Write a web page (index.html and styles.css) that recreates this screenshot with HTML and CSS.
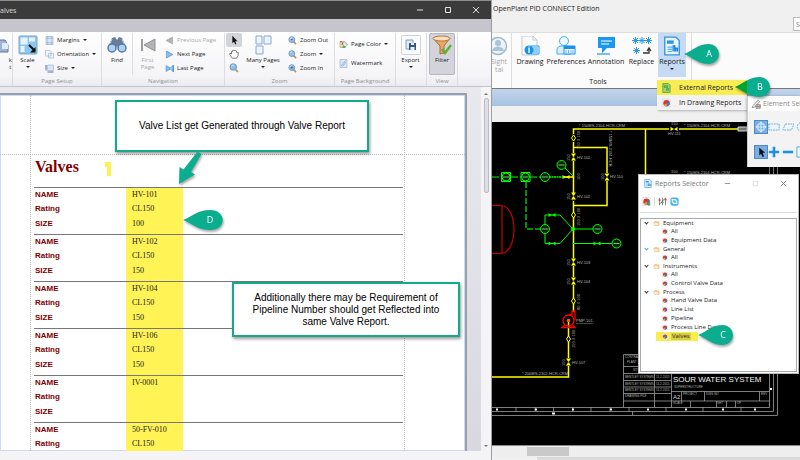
FILE: index.html
```html
<!DOCTYPE html>
<html lang="en">
<head>
<meta charset="utf-8">
<title>Valves</title>
<link rel="stylesheet" href="styles.css">
</head>
<body>
<svg class="sprite" aria-hidden="true">
  <symbol id="pie" viewBox="0 0 12 12"><path d="M1 .5h8l2 2v9H1z" fill="#eef1f5" stroke="#c3c9d2" stroke-width=".6"/><circle cx="6" cy="6.2" r="4.2" fill="#e2331c"/><path d="M6 6.2 9.6 4A4.2 4.2 0 0 1 6.500 10.400z" fill="#2b7de0"/><path d="M6 6.200 6.500 10.400A4.200 4.200 0 0 1 2.500 8.600z" fill="#f4a62a"/></symbol>
  <symbol id="folder" viewBox="0 0 14 12"><path d="M3 2h4l1 1h5v8H3z" fill="#efc98b"/><path d="M1 5h9l2 6H3z" fill="#fbeccd" stroke="#d9ab66" stroke-width=".7"/></symbol>
  <symbol id="lens" viewBox="0 0 20 20"><path d="m12 12 6 6" stroke="#c98a55" stroke-width="3.500"/><circle cx="8.500" cy="8" r="6.500" fill="#8ec2ee" stroke="#7792b5" stroke-width="2"/><path d="M4.500 7a4.500 4.500 0 0 1 5-3" stroke="#e8f5ff" stroke-width="1.500" fill="none"/></symbol>
  <symbol id="report" viewBox="0 0 16 18"><path d="M1.500 1h10l3 3v13h-13z" fill="#e8f4ff" stroke="#2f94e0" stroke-width="1.200"/><path d="M3.500 4h6v3h-6z" fill="#2f94e0"/><path d="M4 10h4M4 12h4M4 14h4" stroke="#5aaeea"/><path d="M9 14V9h1.500v5M11.500 14v-3H13v3" fill="none" stroke="#1c83d8" stroke-width="1.200"/></symbol>
</svg>

<main class="desktop">
  <section class="preview">
    <header class="preview-title">
      <span>alves</span>
      <div class="window-buttons">
        <button aria-label="Minimize"><svg viewBox="0 0 8 8"><path d="M1 4h6"/></svg></button>
        <button aria-label="Maximize"><svg viewBox="0 0 8 8"><path d="M1.500 1.500h5v5h-5z"/></svg></button>
        <button aria-label="Close"><svg viewBox="0 0 8 8"><path d="m1 1 6 6M7 1 1 7"/></svg></button>
      </div>
    </header>
    <div class="tab-strip"></div>
    <div class="ribbon">
      <div class="group g-print">
        <div class="group-body"><button class="big"><svg viewBox="0 0 20 20"><path d="M5 5h8l3 5v7H4z" fill="#9fb4d4" stroke="#60779e"/><path d="M10 8h6v6h-6z" fill="#dcebfa"/></svg><span>k<br>t</span></button></div>
        <div class="group-name"></div>
      </div>
      <div class="group g-setup">
        <div class="group-body">
          <button class="big"><svg viewBox="0 0 20 20"><rect x="1" y="1" width="18" height="18" rx="1" fill="#8ec5ef" stroke="#79a6ce"/><path d="M2.500 2.500h7v7h-7zM11 2.500h6v4h-6zM2.500 11h4v6h-4z" fill="#e5f4ff"/><path d="m11 10 6 6" stroke="#111" stroke-width="2"/><path d="m17.500 12v5.500H12z" fill="#111"/></svg><span>Scale</span><i class="caret"></i></button>
          <div class="rows">
            <button class="row"><svg viewBox="0 0 18 18"><path d="M2 1h14v16H2z" fill="#e3ecf9" stroke="#7d97c0"/><path d="M5.500 1v16M12.500 1v16M2 4.500h14M2 13.500h14" stroke="#7d97c0"/></svg>Margins<i class="caret"></i></button>
            <button class="row"><svg viewBox="0 0 18 18"><path d="M1 1h9l2 2v9H1zM7 7h10v9H7z" fill="#eef4fb" stroke="#86a0c6"/></svg>Orientation<i class="caret"></i></button>
            <button class="row"><svg viewBox="0 0 18 18"><path d="M5 2h12v11H5z" fill="#dce7f6" stroke="#86a0c6"/><path d="M2 2v11M5 16h12" stroke="#536f9d" stroke-width="2"/></svg>Size<i class="caret"></i></button>
          </div>
        </div>
        <div class="group-name">Page Setup</div>
      </div>
      <div class="group g-nav">
        <div class="group-body">
          <button class="big"><svg viewBox="0 0 20 20"><path d="m5 3 3-1 2 3 2-3 3 1 4 9-5 5-4-6-4 6-5-5z" fill="#697c9b"/><path d="M5 4 2.500 10M15 4l2.500 6" stroke="#c5d2e6"/><circle cx="5" cy="13" r="4" fill="#a9d3f7" stroke="#5f779c" stroke-width="1.500"/><circle cx="15" cy="13" r="4" fill="#a9d3f7" stroke="#5f779c" stroke-width="1.500"/></svg><span>Find</span></button>
          <button class="big off ruled" disabled><svg viewBox="0 0 20 20"><path d="M4 4v12" stroke="#9a9a9e" stroke-width="2"/><path d="M17 4v12L6 10z" fill="#b3b3b6" stroke="#929296"/></svg><span>First<br>Page</span></button>
          <div class="rows">
            <button class="row off" disabled><svg viewBox="0 0 18 18"><path d="M15 2v14L2 9z" fill="#b3b3b6" stroke="#929296"/></svg>Previous Page</button>
            <button class="row"><svg viewBox="0 0 18 18"><path d="M3 2v14l13-7z" fill="#83c0f2" stroke="#3d7fc0"/></svg>Next Page</button>
            <button class="row"><svg viewBox="0 0 18 18"><path d="M2 3v12l11-6z" fill="#83c0f2" stroke="#3d7fc0"/><path d="M16 3v12l-6-6z" fill="#a8d4f7" stroke="#3d7fc0"/><path d="M16.500 2v14" stroke="#3d7fc0" stroke-width="2"/></svg>Last Page</button>
          </div>
        </div>
        <div class="group-name">Navigation</div>
      </div>
      <div class="group g-zoom">
        <div class="group-body">
          <div class="tools">
            <button class="tool on" aria-label="Pointer"><svg viewBox="0 0 12 12"><path d="M4 1v9l2-2 1.500 3.500 1.300-.7L7.500 7.500h2.700z" fill="#111"/></svg></button>
            <button class="tool" aria-label="Hand"><svg viewBox="0 0 12 12"><path d="M4 11 1 7V5l2 1V3h1.500V1.500H6L7.500 2l1.500.500V4l2 0v3.500L9 11z" fill="#fff" stroke="#555" stroke-width=".9"/></svg></button>
            <button class="tool" aria-label="Magnifier"><svg viewBox="0 0 20 20"><use href="#lens"/></svg></button>
          </div>
          <button class="big"><svg viewBox="0 0 20 20"><path d="M3 1h6v8H3zM11 1h7v8h-7zM3 11h7v8H3z" fill="#edf4fd" stroke="#8ba6ce"/></svg><span>Many Pages</span><i class="caret"></i></button>
          <div class="rows">
            <button class="row"><svg viewBox="0 0 20 20"><use href="#lens"/><path d="M6 8h5" stroke="#274b7d" stroke-width="1.500"/></svg>Zoom Out</button>
            <button class="row"><svg viewBox="0 0 20 20"><use href="#lens"/></svg>Zoom<i class="caret"></i></button>
            <button class="row"><svg viewBox="0 0 20 20"><use href="#lens"/><path d="M5.500 8h6M8.500 5v6" stroke="#274b7d" stroke-width="1.500"/></svg>Zoom In</button>
          </div>
        </div>
        <div class="group-name">Zoom</div>
      </div>
      <div class="group g-back">
        <div class="group-body">
          <div class="rows roomy">
            <button class="row"><svg viewBox="0 0 18 18"><path d="M2 3h8v12H2z" fill="#f0dfb7" stroke="#a58849"/><path d="m7 7 5-4 5 7-6 5z" fill="#dceaf8" stroke="#5f7896"/><path d="M2 4c4-3 6 2 4 6" fill="none" stroke="#d94c2d" stroke-width="2"/><path d="M7 12h6v4H7z" fill="#5eae4b"/></svg>Page Color<i class="caret"></i></button>
            <button class="row"><svg viewBox="0 0 18 18"><path d="M2 1h14v16H2z" fill="#dce8f8" stroke="#7f9cc5"/><path d="m4 14 9-11M7 15l7-9" stroke="#7f9cc5" stroke-width="1.500"/></svg>Watermark</button>
          </div>
        </div>
        <div class="group-name">Page Background</div>
      </div>
      <div class="group g-export">
        <div class="group-body"><button class="big"><svg viewBox="0 0 20 20"><rect x=".5" y=".5" width="19" height="19" rx="1" fill="#fafbfd" stroke="#cfd1d8"/><path d="M5 5h7v9H5z" fill="#dfeafa" stroke="#7f9cc5"/><path d="M8 8h7v7H8z" fill="#39557f"/><path d="M10 8h3v2h-3zM9.500 12h4v3h-4z" fill="#e8f1fb"/></svg><span>Export</span><i class="caret"></i></button></div>
        <div class="group-name"></div>
      </div>
      <div class="group g-view">
        <div class="group-body"><button class="big on"><svg viewBox="0 0 20 20"><path d="M1 3h17l-6 8v7l-4 1v-8z" fill="#e8a764" stroke="#af6b31"/><ellipse cx="9.500" cy="3.500" rx="8.500" ry="2.500" fill="#f9dfbd" stroke="#b6763e"/><path d="m10 14 3 4 6-8" fill="none" stroke="#65ae3c" stroke-width="2.500"/></svg><span>Filter</span></button></div>
        <div class="group-name">View</div>
      </div>
    </div>
    <div class="viewer">
      <div class="paper-area">
        <article class="paper">
          <h1>Valves <svg class="mark" viewBox="0 0 6 14"><path d="M0 0h6v14H2V5H0z" fill="#fff151"/></svg></h1>
          <table class="records">
            <tbody><tr><th scope="row">NAME</th><td>HV-101</td><td></td></tr><tr><th scope="row">Rating</th><td>CL150</td><td></td></tr><tr><th scope="row">SIZE</th><td>100</td><td></td></tr></tbody>
            <tbody><tr><th scope="row">NAME</th><td>HV-102</td><td></td></tr><tr><th scope="row">Rating</th><td>CL150</td><td></td></tr><tr><th scope="row">SIZE</th><td>150</td><td></td></tr></tbody>
            <tbody><tr><th scope="row">NAME</th><td>HV-104</td><td></td></tr><tr><th scope="row">Rating</th><td>CL150</td><td></td></tr><tr><th scope="row">SIZE</th><td>150</td><td></td></tr></tbody>
            <tbody><tr><th scope="row">NAME</th><td>HV-106</td><td></td></tr><tr><th scope="row">Rating</th><td>CL150</td><td></td></tr><tr><th scope="row">SIZE</th><td>150</td><td></td></tr></tbody>
            <tbody><tr><th scope="row">NAME</th><td>IV-0001</td><td></td></tr><tr><th scope="row">Rating</th><td></td><td></td></tr><tr><th scope="row">SIZE</th><td></td><td></td></tr></tbody>
            <tbody><tr><th scope="row">NAME</th><td>50-FV-010</td><td></td></tr><tr><th scope="row">Rating</th><td>CL150</td><td></td></tr></tbody>
          </table>
        </article>
      </div>
      <div class="vscroll"><i class="up"></i><div class="thumb"></div><i class="down"></i></div>
    </div>
    <div class="hscroll"></div>
  </section>

  <section class="cad">
    <header class="cad-title">OpenPlant PID CONNECT Edition</header>
    <div class="search-row"><input aria-label="Search" value="Search"></div>
    <div class="cad-ribbon">
      <div class="cad-group cut">
        <button class="app off"><svg viewBox="0 0 20 20"><circle cx="9" cy="10" r="8.500" fill="#edf3f8" stroke="#9db7cc" stroke-width="1.500"/><circle cx="9" cy="7" r="3" fill="#a9c3d7"/><path d="M3 15c1-6 11-6 12 0z" fill="#a9c3d7"/></svg><span>Sight<br>tal</span></button>
      </div>
      <div class="cad-group wide">
        <div class="apps">
          <button class="app"><svg viewBox="0 0 20 20"><path d="M2 0h11l4 4v15H2z" fill="#fafafa" stroke="#c8c8c8"/><path d="M13 0v4h4" fill="none" stroke="#c8c8c8"/><path d="M11 10h8v8h-8z" fill="#fff" stroke="#239ae8"/><path d="M13 12h5M13 14h5M13 16h5" stroke="#239ae8"/><circle cx="9" cy="14" r="4.500" fill="#1794ea"/><path d="M9 12v5M9 10.500v1" stroke="#fff" stroke-width="1.300"/></svg><span>Drawing</span></button>
          <button class="app"><svg viewBox="0 0 20 20"><circle cx="8" cy="5" r="4.500" fill="#eef8ff" stroke="#42aef2"/><path d="M1 18v-4q0-4 5-4h5q4 0 4 4v4z" fill="#d9effe" stroke="#42aef2"/><path d="M8 10h11v8H8z" fill="#fff" stroke="#1694ea"/><path d="M8 10h11v3H8z" fill="#1694ea"/><path d="M10 14v4M12.500 14v4M15 14v4M17 14v4" stroke="#5db6f2"/></svg><span>Preferences</span></button>
          <button class="app"><svg viewBox="0 0 20 20"><path d="M2 1h17v11h-8l-5 5v-5H2z" fill="#1a98f0"/><path d="M5 5h11M5 8h8" stroke="#fff" stroke-width="1.200"/><path d="M1 18h13" stroke="#47adf0" stroke-width="1.500"/></svg><span>Annotation</span></button>
          <button class="app"><svg viewBox="0 0 20 20"><g stroke="#239ae8"><path id="star" d="M3.500 1v7M0 4.500h7M1 2l5 5M6 2 1 7"/><use href="#star" x="6.500"/><use href="#star" x="13"/><use href="#star" x="1" y="10"/></g><path d="M11 17h6v-4m-2 2 2-3 2 3" fill="none" stroke="#333" stroke-width="1.300"/></svg><span>Replace</span></button>
          <button class="app on"><svg viewBox="0 0 16 18"><use href="#report"/></svg><span>Reports</span><i class="caret"></i></button>
        </div>
        <div class="cad-group-name">Tools</div>
      </div>
    </div>
    <div class="blue-strip"></div>
    <div class="view-bar"></div>
    <div class="canvas">
      <svg viewBox="492 122 308 324" preserveAspectRatio="xMinYMin slice">
        <defs>
          <g id="vv"><path d="M-2.500-3.500h5L-2.500 3.500h5z"/></g>
          <g id="hv"><path d="M-3.500-2v4L3.500-2v4z"/></g>
          <g id="dm"><path d="M0-3 2 0 0 3-2 0z"/></g>
        </defs>
        <g fill="none" stroke="#ffff00" stroke-width="1.500">
          <path d="M738 129H573.500V312M573.500 147.500H607V205.500H573.500M645.500 129V176M568.500 321V377H492M564 177h9"/>
        </g>
        <path d="M669 129h10M573.500 134v8M573.500 153v8M573.500 193v8M607 173v8M573.500 258v8M573.500 277v8M568.500 358v8" stroke="#000" stroke-width="2"/>
        <g fill="#ffff00">
          <use href="#hv" x="674" y="129"/><use href="#hv" x="566" y="177"/>
          <use href="#vv" x="573.500" y="157"/><use href="#vv" x="573.500" y="196"/><use href="#vv" x="607" y="177"/><use href="#vv" x="573.500" y="262"/><use href="#vv" x="573.500" y="281"/><use href="#vv" x="568.500" y="362"/>
        </g>
        <g fill="#000" stroke="#ffff00"><use href="#dm" x="573.500" y="138"/><use href="#dm" x="573.500" y="215"/><use href="#dm" x="573.500" y="301"/><use href="#dm" x="568.500" y="339"/></g>
        <g fill="none" stroke="#00ff00">
          <path d="M492 177h9M511 177h10M530 177h11" stroke-dasharray="7 2"/>
          <path d="M549 177h15" stroke-width="1.500" stroke-dasharray="2 .5"/>
          <path d="M526 182v47h15" stroke="#00c000" stroke-width="1.500" stroke-dasharray="6 2"/>
          <path d="M501.500 172.500h9v9h-9zM521 172.500h9v9h-9z"/>
          <path d="m565 168 8 8M545 225v-10h15l13 14-13 14.500h-15V233M573 229h20M573 243.500h39"/>
          <g fill="#002400"><circle cx="506" cy="177" r="4"/><circle cx="525.500" cy="177" r="4"/><circle cx="545" cy="177" r="4.500"/><circle cx="561.500" cy="165" r="4.500"/><circle cx="545" cy="229" r="4.500"/><circle cx="597.500" cy="229" r="4.500"/><circle cx="616.500" cy="243.500" r="4.500"/></g>
          <path d="M503 177h6M522.500 177h6M542 177h6M558.500 165h6M542 229h6M594.500 229h6M613.500 243.500h6" stroke="#b8d8b8" stroke-width=".8"/>
        </g>
        <g fill="#00ff00"><use href="#hv" x="552" y="215"/><use href="#hv" x="552" y="243.500"/><use href="#hv" x="597" y="243.500"/><circle cx="573" cy="229" r="2"/></g>
        <g fill="none" stroke="#c80000" stroke-width="1.200"><path d="M492 205.500h10v48h-10M502 205.500c16 3 16 45 0 48"/></g>
        <g fill="none" stroke="#ff0000" stroke-width="1.300"><circle cx="568.500" cy="320.500" r="5.500"/><path d="M569 315h3v-4h3v9M565 325l-3 2.500h13l-2.500-2.500"/></g><circle cx="568.500" cy="320.500" r="1.800" fill="#ff5a00"/>
        <g class="tag">
          <text x="577" y="159">HV-102</text><text x="577" y="198">HV-102</text><text x="610" y="178">HV-110</text><text x="577" y="264">HV-103</text><text x="577" y="283">HV-104</text><text x="572" y="364">HV-107</text><text x="576" y="322" text-decoration="underline">PMP-101</text>
          <text x="579" y="127">* 150MS-2104-HCR-CRM</text><text x="684" y="127">* 150MS-2104-HCR-CRM</text><text x="684" y="174">* 150MS-2104-HCR-CRM</text><text x="522" y="375">* 200MS-2102-HCR-CRM</text><text x="671" y="125">150</text><text x="668" y="135">HV-111</text><text x="671" y="173">150</text>
          <text transform="translate(580 149) rotate(-90)">150 X 150</text><text transform="translate(580 226) rotate(-90)">150 X 100</text><text transform="translate(580 310) rotate(-90)">80 X 100</text><text transform="translate(575 348) rotate(-90)">150 X 100</text><text transform="translate(609 131) rotate(90)">* 150MS-2104-HCR</text>
          <text transform="translate(570 161) rotate(-90)">150</text><text transform="translate(570 200) rotate(-90)">150</text><text transform="translate(580 180) rotate(-90)">100</text><text transform="translate(604 180) rotate(-90)">100</text><text transform="translate(570 266) rotate(-90)">150</text><text transform="translate(570 285) rotate(-90)">150</text><text transform="translate(565 366) rotate(-90)">150</text>
        </g>
        <path d="M738 127h9v4h-9z" fill="#777" stroke="#ddd"/>
        <g fill="none" stroke="#9c9c9c" stroke-width=".8">
          <path d="M492 407.500H769.500V122M492 411.500H773.500V122M492 415.500H777.500V122"/>
          <path d="M623.500 407.500v-53h30M623.500 366.500h48M623.500 373.500h146M623.500 380.500h48M623.500 387h48M623.500 393.500h48M623.500 401h146M654.500 354v53.500M671.500 354v53.500M671.500 391.500h98M681.500 391.500v9.500M704.500 391.500v9.500M759.500 391.500v9.500M690.500 401v6.500M716.500 401v6.500M726.500 401v6.500M735.500 401v6.500"/>
          <path d="M516 407v4M535 407v4M553.500 407v4M572.500 407v4M591 407v4M610 407v4M629 407v4M666 407v4M703 407v4M741 407v4M632.500 411v4M769 352h4"/>
        </g>
        <path d="M496 409.500h2M535 409.500h2M572 409.500h2M610 409.500h2M647 409.500h2M685 409.500h2M722 409.500h2M754 409.500h2M552 413.500h3M771 388v2" stroke="#fff" stroke-width="2"/>
        <g class="tag small">
          <text x="625" y="358">CONTRACT</text><text x="627" y="363">PLANT 1</text><text x="633" y="371">SITE 2</text><text x="625" y="378">BENTLEY SYSTEMS</text><text x="625" y="385">BENTLEY SYSTEMS</text><text x="625" y="391">BENTLEY SYSTEMS</text><text x="656" y="378">11-2-2015</text><text x="656" y="385">11-2-2015</text><text x="656" y="391">11-2-2015</text><text x="625" y="397">DRAWING FILE</text><text x="674" y="388">SUPERSTRUCTURE</text><text x="683" y="395">PROJECT</text><text x="706" y="395">DWG NO</text><text x="761" y="395">REV</text><text x="673" y="404">SCALE</text><text x="717" y="404">SHT</text><text x="737" y="404">OF</text>
        </g>
        <text class="drawing-name" x="673" y="382">SOUR WATER SYSTEM</text>
        <text class="drawing-size" x="673" y="399">A2</text>
      </svg>
    </div>
    <div class="cad-scroll"><div class="cad-thumb"></div></div>
    <div class="status"></div>
  </section>

  <div class="menu" role="menu">
    <button class="menu-item marked" role="menuitem"><svg viewBox="0 0 16 18"><path d="M1.500 1h10l3 3v13h-13z" fill="#aad36b" stroke="#4da047" stroke-width="1.500"/><path d="M4 5h6v3H4zM8 14v-4h4v4" fill="#73b948" stroke="#399247"/></svg>External Reports</button>
    <button class="menu-item" role="menuitem"><svg viewBox="0 0 12 12"><use href="#pie"/></svg>In Drawing Reports</button>
  </div>

  <section class="elements">
    <header><svg viewBox="0 0 16 16"><path d="m3 11 8-9 3 2-8 9-4 1z" fill="#eee" stroke="#666"/><path d="M8 9h7v6H8z" fill="#ddd" stroke="#777"/><path d="M10 9v6M13 9v6M8 12h7" stroke="#777"/></svg>Element Sel</header>
    <div class="element-tools">
      <button class="on" aria-label="Individual"><svg viewBox="0 0 14 14"><path d="M7 1v12M1 7h12M7 1 5 3M7 1l2 2M7 13l-2-2M7 13l2-2M1 7l2-2M1 7l2 2M13 7l-2-2M13 7l-2 2M3.500 3.500h7v7h-7z" fill="none" stroke="#e6f4ff"/></svg></button>
      <button aria-label="Block"><svg viewBox="0 0 14 14"><path d="M1 3.500h12v7H1z" fill="none" stroke="#48a6e4" stroke-dasharray="2 1"/></svg></button>
      <button aria-label="Shape"><svg viewBox="0 0 14 14"><path d="M4 3.500h10l-3 7H1z" fill="none" stroke="#48a6e4" stroke-dasharray="2 1"/></svg></button>
      <button aria-label="Circle"><svg viewBox="0 0 14 14"><circle cx="7" cy="7" r="5.500" fill="none" stroke="#48a6e4" stroke-dasharray="2 1"/></svg></button>
    </div>
    <div class="element-tools">
      <button class="on" aria-label="New"><svg viewBox="0 0 14 14"><path d="M5 2v9l2-2 2 4 1.500-1L9 8h3z" fill="#111"/></svg></button>
      <button aria-label="Add"><svg viewBox="0 0 14 14"><path d="M7 1v12M1 7h12" stroke="#1f8fe0" stroke-width="3"/></svg></button>
      <button aria-label="Subtract"><svg viewBox="0 0 14 14"><path d="M1 7h12" stroke="#1f8fe0" stroke-width="3"/></svg></button>
      <button aria-label="Invert"><svg viewBox="0 0 14 14"><path d="M1 1h12v12H1z" fill="#eaf5fd" stroke="#48a6e4"/></svg></button>
    </div>
  </section>

  <section class="selector">
    <header>
      <svg class="app-icon" viewBox="0 0 16 18"><use href="#report"/></svg><h2>Reports Selector</h2>
      <button aria-label="Minimize"><svg viewBox="0 0 8 8"><path d="M1 4h6"/></svg></button>
      <button class="faint" aria-label="Maximize"><svg viewBox="0 0 8 8"><path d="M1.500 1.500h5v5h-5z"/></svg></button>
      <button aria-label="Close"><svg viewBox="0 0 8 8"><path d="m1 1 6 6M7 1 1 7"/></svg></button>
    </header>
    <div class="selector-tools">
      <button aria-label="New report"><svg viewBox="0 0 12 12"><use href="#pie"/><path d="M7 9.500h4M9 7.500v4" stroke="#4b9e2f" stroke-width="1.500"/></svg></button>
      <button class="ruled" aria-label="Settings"><svg viewBox="0 0 12 12"><path d="M2 1v10M6 1v10M10 1v10" stroke="#666"/><circle cx="2" cy="4" r="1.500" fill="#d44"/><circle cx="6" cy="7" r="1.500" fill="#4a4"/><circle cx="10" cy="3.500" r="1.500" fill="#d44"/><path d="m3 9 6-7" stroke="#555"/></svg></button>
      <button aria-label="Refresh"><svg viewBox="0 0 12 12"><rect x=".5" y=".5" width="11" height="11" rx="3" fill="#4cb3f0"/><path d="M3 6V3.500h4L9 6M9 6v2.500H5L3 6" fill="none" stroke="#fff" stroke-width="1.500"/></svg></button>
    </div>
    <ul class="tree">
      <li><span class="folder"><i class="chev"></i><svg viewBox="0 0 14 12"><use href="#folder"/></svg>Equipment</span>
        <ul><li><svg viewBox="0 0 12 12"><use href="#pie"/></svg>All</li><li><svg viewBox="0 0 12 12"><use href="#pie"/></svg>Equipment Data</li></ul></li>
      <li><span class="folder"><i class="chev hot"></i><svg viewBox="0 0 14 12"><use href="#folder"/></svg>General</span>
        <ul><li><svg viewBox="0 0 12 12"><use href="#pie"/></svg>All</li></ul></li>
      <li><span class="folder"><i class="chev"></i><svg viewBox="0 0 14 12"><use href="#folder"/></svg>Instruments</span>
        <ul><li><svg viewBox="0 0 12 12"><use href="#pie"/></svg>All</li><li><svg viewBox="0 0 12 12"><use href="#pie"/></svg>Control Valve Data</li></ul></li>
      <li><span class="folder"><i class="chev"></i><svg viewBox="0 0 14 12"><use href="#folder"/></svg>Process</span>
        <ul><li><svg viewBox="0 0 12 12"><use href="#pie"/></svg>Hand Valve Data</li><li><svg viewBox="0 0 12 12"><use href="#pie"/></svg>Line List</li><li><svg viewBox="0 0 12 12"><use href="#pie"/></svg>Pipeline</li><li><svg viewBox="0 0 12 12"><use href="#pie"/></svg>Process Line Data</li><li class="picked"><svg viewBox="0 0 12 12"><use href="#pie"/></svg><span>Valves</span></li></ul></li>
    </ul>
  </section>

  <p class="note note-top">Valve List get Generated through Valve Report</p>
  <p class="note note-low">Additionally there may be Requirement of Pipeline Number should get Reflected into same Valve Report.</p>
  <svg class="arrow" viewBox="0 0 26 36"><path d="M20.500 1.500 24.500 4 14 22l4 2.500L2 34 2.500 17l4 2.500z" fill="#0aae8e"/></svg>

  <div class="pin pin-a"><svg viewBox="0 0 36 20"><path d="M0 10C10 6 14 0 25 0a10 10 0 0 1 0 20C14 20 10 14 0 10z"/></svg><span>A</span></div>
  <div class="pin pin-b"><svg viewBox="0 0 36 20"><path d="M0 10C10 6 14 0 25 0a10 10 0 0 1 0 20C14 20 10 14 0 10z"/><path d="M0 10C5 8 8 5.500 12 3.500v13C8 14.500 5 12 0 10z" class="deep"/></svg><span>B</span></div>
  <div class="pin pin-c"><svg viewBox="0 0 36 20"><path d="M0 10C10 6 14 0 25 0a10 10 0 0 1 0 20C14 20 10 14 0 10z"/></svg><span>C</span></div>
  <div class="pin pin-d"><svg viewBox="0 0 40 20"><path d="M0 10C10 6 15 0 27 0c17 0 17 20 0 20C15 20 10 14 0 10z"/></svg><span>D</span></div>
</main>
</body>
</html>
```
FILE: styles.css
```css
* { box-sizing: border-box; }
body { margin: 0; font: 6px/7px "Open Sans", sans-serif; color: #222; background: #f0f0f0; }
button, input { font: inherit; color: inherit; border: 0; padding: 0; margin: 0; background: none; }
h1, h2, p, ul { margin: 0; padding: 0; font-weight: normal; list-style: none; }
svg { display: block; flex: none; }
.sprite { position: absolute; width: 0; height: 0; }
.desktop { position: relative; display: grid; grid-template-columns: 61.5% 1fr; height: 100vh; overflow: hidden; }

/* Print preview window */
.preview { display: flex; flex-direction: column; min-width: 0; min-height: 0; overflow: hidden; background: #f4f4f7; border-right: 1px solid #9c9ca2; }
.preview-title { display: flex; justify-content: space-between; align-items: center; flex: none; height: 19px; border-top: 1px solid #8c8c8c; background: #3b3b3b; color: #ddd; font-size: 7px; }
.window-buttons { display: flex; gap: 20px; padding-right: 11px; }
.window-buttons svg { width: 8px; height: 8px; fill: none; stroke: #e4e4e4; }
.tab-strip { flex: none; height: 13px; background: #c6c5ce; }
.ribbon { display: flex; flex: none; height: 55px; padding-top: 1px; border-bottom: 1px solid #c4c4cb; background: linear-gradient(#fefefe, #f5f5f8 80%, #ececf0); overflow: hidden; }
.group { display: flex; flex-direction: column; flex: none; border-right: 1px solid #dcdce2; }
.group-body { display: flex; height: 43px; }
.group-name { height: 10px; line-height: 10px; text-align: center; color: #8f8f98; }
.g-print { width: 13px; }
.g-setup { width: 89px; }
.g-nav { width: 123px; }
.g-zoom { width: 110px; }
.g-back { width: 61px; }
.g-export { width: 31px; }
.g-view { width: 31px; }
.big { display: flex; flex-direction: column; align-items: center; flex: none; width: 29px; height: 42px; padding-top: 2px; gap: 2px; line-height: 7px; text-align: center; white-space: nowrap; }
.big svg { width: 20px; height: 20px; }
.g-print .big { margin-left: -16px; width: 28px; align-items: flex-end; }
.g-nav .big { width: 30px; }
.g-zoom .big { width: 42px; }
.big.on { background: #d3d3dc; border: 1px solid #b7b7c1; border-radius: 2px; padding-top: 1px; width: 26px; margin-left: 2px; }
.off { color: #a6a6aa; }
.ruled { border-left: 1px solid #dcdce2; }
.caret { width: 0; height: 0; border: 2px solid transparent; border-top-color: #222; border-bottom: 0; }
.rows { display: flex; flex-direction: column; padding-left: 4px; }
.row { display: flex; align-items: center; height: 14px; gap: 3px; white-space: nowrap; }
.row svg { width: 9px; height: 9px; }
.rows.roomy { gap: 5px; padding-top: 4px; }
.tools { display: flex; flex-direction: column; padding-left: 1px; }
.tool { display: grid; place-items: center; width: 16px; height: 14px; }
.tool svg { width: 10px; height: 10px; }
.tool.on { background: #d3d3dc; border-radius: 2px; }
.g-setup .big + .rows, .g-nav .rows { padding-left: 3px; }

.viewer { display: flex; flex: 1; min-height: 0; padding-top: 6px; background: linear-gradient(#e9e9ed, #d8d8df); }
.paper-area { flex: 1; min-width: 0; padding-right: 14px; overflow: hidden; }
.paper { position: relative; height: 100%; padding: 64px 62px 0 34px; overflow: hidden; background: #fff; border-top: 2px solid #9b9fab; border-right: 2px solid #9b9fab; box-shadow: inset 0 0 0 1px #ccdafa; }
.paper::before { content: ""; position: absolute; inset: 0 60px 0 30px; border: 1px dotted #bbb; border-width: 0 1px; }
.paper::after { content: ""; position: absolute; inset: 59px 0 auto 0; border-top: 1px dotted #bbb; }
.paper h1 { display: flex; gap: 26px; height: 28px; padding-left: 1px; font: bold 16px/16px "Liberation Serif", serif; color: #800000; }
.mark { width: 6px; height: 14px; margin-top: 3px; }
.records { width: 100%; border-collapse: separate; border-spacing: 0; table-layout: fixed; color: #222; }
.records th, .records td { height: 14px; padding: 0; font-size: 8px; line-height: 12px; text-align: left; }
.records th { width: 92px; padding-left: 1px; font-family: "Liberation Sans", sans-serif; color: #800000; }
.records td { font-family: "Liberation Serif", serif; }
.records th + td { width: 57px; padding-left: 6px; background: #fff355; }
.records tr:first-child > * { height: 15px; border-top: 1px solid #777; }
.records tr:nth-child(3) > * { height: 18px; padding-bottom: 3px; }
.vscroll { display: flex; flex-direction: column; align-items: center; flex: none; width: 10px; margin-top: -6px; padding: 6px 0 4px; background: #f4f4f7; }
.up, .down { border: 2px solid transparent; }
.up { border-bottom-color: #777; border-top: 0; }
.down { border-top-color: #777; border-bottom: 0; }
.thumb { width: 5px; height: 95px; margin: 3px 0 auto; border: 1px solid #bcbcc6; border-radius: 2px; background: #dedee5; }
.hscroll { flex: none; height: 9px; background: #f4f4f7; }

/* Drawing application */
.cad { display: flex; flex-direction: column; min-width: 0; min-height: 0; overflow: hidden; background: #f0f0f0; font-size: 7px; line-height: 8px; }
.cad-title { flex: none; height: 17px; padding: 5px 1px 0; white-space: nowrap; }
.search-row { display: flex; justify-content: flex-end; flex: none; height: 15px; }
.search-row input { width: 28px; height: 14px; margin-right: -21px; padding-left: 2px; border: 1px solid #bbb; background: #fff; color: #888; }
.cad-ribbon { display: flex; flex: none; height: 57px; border-top: 1px solid #ddd; border-bottom: 1px solid #777; background: #fbfbfb; }
.cad-group { flex: none; border-right: 1px solid #ddd; }
.cut { width: 20px; overflow: hidden; }
.cut .app { margin-left: -9px; }
.wide { width: 180px; padding-left: 2px; }
.apps { display: flex; }
.app { display: flex; flex-direction: column; align-items: center; gap: 2px; width: 32px; height: 44px; padding-top: 3px; white-space: nowrap; }
.app svg { width: 20px; height: 20px; }
.app:nth-child(2), .app:nth-child(3) { width: 40px; }
.app:nth-child(4) { width: 31px; }
.app.on { width: 28px; background: #c5daf3; margin-left: 1px; }
.cad-group-name { width: 168px; text-align: center; line-height: 9px; }
.blue-strip { flex: none; height: 17px; background: linear-gradient(#c1d5ec, #a9c2e0); }
.view-bar { flex: none; height: 16px; background: #f0f0f0; }
.canvas { flex: 1; min-height: 0; overflow: hidden; background: #000; border-bottom: 1px solid #888; }
.canvas svg { width: 100%; height: 100%; }
.tag { font: 4px "Liberation Sans", sans-serif; fill: #b4b4b4; }
.tag.small { font-size: 3px; }
.drawing-name { font: 8px "Liberation Sans", sans-serif; fill: #f2f2f2; }
.drawing-size { font: 6px "Liberation Sans", sans-serif; fill: #d2d2d2; }
.cad-scroll { flex: none; height: 11px; padding: 1px 0 1px 35px; background: #eee; }
.cad-thumb { width: 42px; height: 9px; background: #c9c9c9; }
.status { flex: none; height: 3px; margin-left: 45px; background: #d9d9d9; }

/* Floating windows */
.menu { position: absolute; left: 657px; top: 80px; width: 90px; background: #f2f2f2; box-shadow: 1px 1px 2px #0004; font-size: 7px; }
.menu-item { display: flex; align-items: center; gap: 8px; width: 100%; height: 15px; padding-left: 5px; white-space: nowrap; }
.menu-item svg { width: 9px; height: 10px; }
.menu-item.marked { background: #f7ec52; }
.elements { position: absolute; left: 747px; right: 0; top: 96px; overflow: hidden; background: #f3f3f3; border-left: 1px solid #ccc; box-shadow: 0 1px 3px #0006; }
.elements header { display: flex; align-items: center; gap: 2px; height: 15px; padding-left: 3px; background: #fff; color: #888; font-size: 7px; white-space: nowrap; }
.elements header svg { width: 10px; height: 10px; }
.element-tools { display: flex; height: 25px; padding: 9px 0 0 6px; }
.element-tools + .element-tools { height: 31px; padding-top: 9px; }
.element-tools button { width: 14px; height: 14px; flex: none; }
.element-tools .on { background: #78aee2; border: 1px solid #4b8bc9; }
.element-tools svg { width: 12px; height: 12px; }
.selector { position: absolute; left: 638px; right: 1px; top: 174px; padding: 0 1px 1px; background: #fff; border: 1px solid #bbb; }
.selector header { display: flex; align-items: center; height: 17px; padding-left: 4px; color: #777; }
.selector header h2 { flex: 1; padding-left: 3px; font-size: 7px; white-space: nowrap; }
.app-icon { width: 8px; height: 9px; }
.selector header button { width: 28px; display: grid; place-items: center; }
.selector header button svg { width: 7px; height: 7px; fill: none; stroke: #888; }
.selector header .faint svg { stroke: #ddd; }
.selector-tools { display: flex; align-items: center; gap: 3px; height: 21px; padding: 0 2px 2px; border-bottom: 1px solid #ddd; }
.selector-tools svg { width: 9px; height: 9px; }
.selector-tools .ruled { padding-left: 3px; }
.tree { height: 154px; margin-top: 5px; border: 1px solid #a5a9b0; background: #fff; color: #222; white-space: nowrap; }
.folder { display: flex; align-items: center; gap: 3px; height: 8px; padding-left: 3px; }
.folder svg { width: 7px; height: 6px; }
.chev { width: 3px; height: 3px; margin: 0 2px 2px 1px; border: solid #333; border-width: 0 1px 1px 0; transform: rotate(45deg); }
.chev.hot { border-color: #2bb0e6; }
.tree li li { display: flex; align-items: center; gap: 3px; height: 9px; padding-left: 21px; }
.tree li li svg { width: 6px; height: 7px; }
.tree .picked { width: 57px; background: linear-gradient(to right, #fff 15px, #f9ef4c 15px); }
.picked span { padding: 0 1px; background: #d7ce45; }

/* Annotations laid over the screen */
.note { position: absolute; display: grid; place-items: center; border: 2px solid #12a98c; background: #fff; box-shadow: 1px 2px 3px #0006; color: #000; font: 10px/12px "Liberation Sans", sans-serif; text-align: center; }
.note-top { left: 115px; top: 100px; width: 254px; height: 52px; }
.note-low { left: 232px; top: 282px; width: 228px; height: 55px; padding: 0 12px; }
.arrow { position: absolute; left: 177px; top: 150px; width: 26px; height: 36px; filter: drop-shadow(1px 2px 1px #0005); }
.pin { position: absolute; width: 36px; height: 20px; color: #fff; filter: drop-shadow(1px 2px 1px #0005); }
.pin svg { width: 100%; height: 100%; fill: #0aae8e; }
.pin .deep { fill: #06a22f; }
.pin span { position: absolute; inset: 0 0 0 14px; font: 9px/20px "Open Sans", sans-serif; text-align: center; }
.pin-a { left: 684px; top: 44px; }
.pin-b { left: 735px; top: 77px; }
.pin-c { left: 698px; top: 325px; }
.pin-d { left: 183px; top: 210px; width: 40px; }
```
